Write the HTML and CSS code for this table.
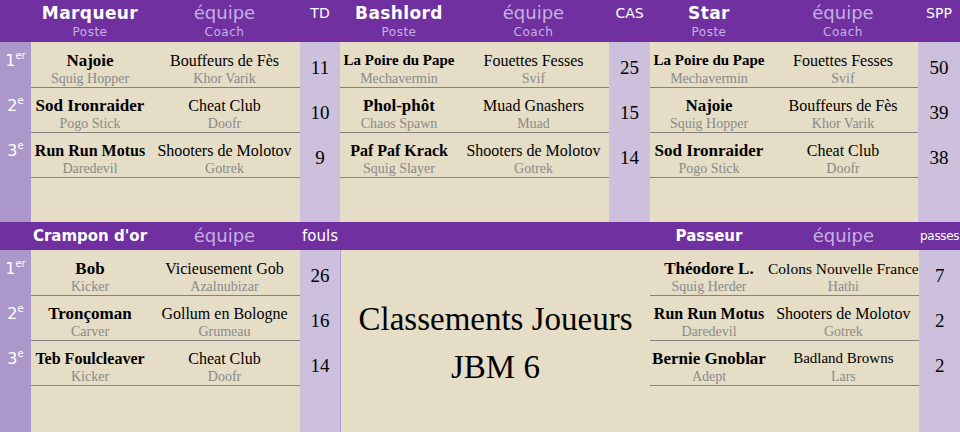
FILE: index.html
```html
<!DOCTYPE html>
<html lang="fr">
<head>
    <meta charset="UTF-8">
    <title>Classements Joueurs - JBM 6</title>
    <link rel="stylesheet" href="styles.css">
</head>
<body>
    <div class="board">
        <!-- Marqueur -->
        <section class="panel panel-top with-rank">
            <div class="panel-head">
                <div></div>
                <div class="head-cols">
                    <div class="head-cell"><span class="head-title">Marqueur</span><span class="head-sub">Poste</span></div>
                    <div class="head-cell"><span class="head-team">équipe</span><span class="head-sub">Coach</span></div>
                </div>
                <div class="head-stat">TD</div>
            </div>
            <div class="rank-col">
                <div class="rank">1<sup>er</sup></div>
                <div class="rank">2<sup>e</sup></div>
                <div class="rank">3<sup>e</sup></div>
            </div>
            <div class="rows">
                <div class="row">
                    <div class="cell"><div class="name">Najoie</div><div class="sub">Squig Hopper</div></div>
                    <div class="cell"><div class="team">Bouffeurs de Fès</div><div class="sub">Khor Varik</div></div>
                </div>
                <div class="row">
                    <div class="cell"><div class="name">Sod Ironraider</div><div class="sub">Pogo Stick</div></div>
                    <div class="cell"><div class="team">Cheat Club</div><div class="sub">Doofr</div></div>
                </div>
                <div class="row">
                    <div class="cell"><div class="name name-sm">Run Run Motus</div><div class="sub">Daredevil</div></div>
                    <div class="cell"><div class="team">Shooters de Molotov</div><div class="sub">Gotrek</div></div>
                </div>
            </div>
            <div class="value-col">
                <div class="value">11</div>
                <div class="value">10</div>
                <div class="value">9</div>
            </div>
        </section>

        <!-- Bashlord -->
        <section class="panel panel-top">
            <div class="panel-head">
                <div class="head-cols">
                    <div class="head-cell"><span class="head-title">Bashlord</span><span class="head-sub">Poste</span></div>
                    <div class="head-cell"><span class="head-team">équipe</span><span class="head-sub">Coach</span></div>
                </div>
                <div class="head-stat">CAS</div>
            </div>
            <div class="rows">
                <div class="row">
                    <div class="cell"><div class="name name-xs">La Poire du Pape</div><div class="sub">Mechavermin</div></div>
                    <div class="cell"><div class="team">Fouettes Fesses</div><div class="sub">Svif</div></div>
                </div>
                <div class="row">
                    <div class="cell"><div class="name">Phol-phôt</div><div class="sub">Chaos Spawn</div></div>
                    <div class="cell"><div class="team">Muad Gnashers</div><div class="sub">Muad</div></div>
                </div>
                <div class="row">
                    <div class="cell"><div class="name name-sm">Paf Paf Krack</div><div class="sub">Squig Slayer</div></div>
                    <div class="cell"><div class="team">Shooters de Molotov</div><div class="sub">Gotrek</div></div>
                </div>
            </div>
            <div class="value-col">
                <div class="value">25</div>
                <div class="value">15</div>
                <div class="value">14</div>
            </div>
        </section>

        <!-- Star -->
        <section class="panel panel-top panel-right">
            <div class="panel-head">
                <div class="head-cols">
                    <div class="head-cell"><span class="head-title">Star</span><span class="head-sub">Poste</span></div>
                    <div class="head-cell"><span class="head-team">équipe</span><span class="head-sub">Coach</span></div>
                </div>
                <div class="head-stat">SPP</div>
            </div>
            <div class="rows">
                <div class="row">
                    <div class="cell"><div class="name name-xs">La Poire du Pape</div><div class="sub">Mechavermin</div></div>
                    <div class="cell"><div class="team">Fouettes Fesses</div><div class="sub">Svif</div></div>
                </div>
                <div class="row">
                    <div class="cell"><div class="name">Najoie</div><div class="sub">Squig Hopper</div></div>
                    <div class="cell"><div class="team">Bouffeurs de Fès</div><div class="sub">Khor Varik</div></div>
                </div>
                <div class="row">
                    <div class="cell"><div class="name">Sod Ironraider</div><div class="sub">Pogo Stick</div></div>
                    <div class="cell"><div class="team">Cheat Club</div><div class="sub">Doofr</div></div>
                </div>
            </div>
            <div class="value-col">
                <div class="value">50</div>
                <div class="value">39</div>
                <div class="value">38</div>
            </div>
        </section>

        <!-- Crampon d'or -->
        <section class="panel panel-bottom with-rank">
            <div class="panel-head">
                <div></div>
                <div class="head-cols">
                    <div class="head-cell"><span class="head-title">Crampon d'or</span></div>
                    <div class="head-cell"><span class="head-team">équipe</span></div>
                </div>
                <div class="head-stat">fouls</div>
            </div>
            <div class="rank-col">
                <div class="rank">1<sup>er</sup></div>
                <div class="rank">2<sup>e</sup></div>
                <div class="rank">3<sup>e</sup></div>
            </div>
            <div class="rows">
                <div class="row">
                    <div class="cell"><div class="name">Bob</div><div class="sub">Kicker</div></div>
                    <div class="cell"><div class="team">Vicieusement Gob</div><div class="sub">Azalnubizar</div></div>
                </div>
                <div class="row">
                    <div class="cell"><div class="name">Tronçoman</div><div class="sub">Carver</div></div>
                    <div class="cell"><div class="team">Gollum en Bologne</div><div class="sub">Grumeau</div></div>
                </div>
                <div class="row">
                    <div class="cell"><div class="name name-sm">Teb Foulcleaver</div><div class="sub">Kicker</div></div>
                    <div class="cell"><div class="team">Cheat Club</div><div class="sub">Doofr</div></div>
                </div>
            </div>
            <div class="value-col">
                <div class="value">26</div>
                <div class="value">16</div>
                <div class="value">14</div>
            </div>
        </section>

        <!-- Titre -->
        <section class="panel panel-bottom panel-title">
            <div class="panel-head"></div>
            <div class="title-card">
                <div>Classements Joueurs</div>
                <div>JBM 6</div>
            </div>
        </section>

        <!-- Passeur -->
        <section class="panel panel-bottom panel-right">
            <div class="panel-head">
                <div class="head-cols">
                    <div class="head-cell"><span class="head-title">Passeur</span></div>
                    <div class="head-cell"><span class="head-team">équipe</span></div>
                </div>
                <div class="head-stat head-stat-sm">passes</div>
            </div>
            <div class="rows">
                <div class="row">
                    <div class="cell"><div class="name">Théodore L.</div><div class="sub">Squig Herder</div></div>
                    <div class="cell"><div class="team team-xs">Colons Nouvelle France</div><div class="sub">Hathi</div></div>
                </div>
                <div class="row">
                    <div class="cell"><div class="name name-sm">Run Run Motus</div><div class="sub">Daredevil</div></div>
                    <div class="cell"><div class="team">Shooters de Molotov</div><div class="sub">Gotrek</div></div>
                </div>
                <div class="row">
                    <div class="cell"><div class="name">Bernie Gnoblar</div><div class="sub">Adept</div></div>
                    <div class="cell"><div class="team team-sm">Badland Browns</div><div class="sub">Lars</div></div>
                </div>
            </div>
            <div class="value-col">
                <div class="value">7</div>
                <div class="value">2</div>
                <div class="value">2</div>
            </div>
        </section>
    </div>
</body>
</html>
```

FILE: styles.css
```css
:root {
    --purple: #7030a0;
    --rank-bg: #ab97c9;
    --value-bg: #cdc0dc;
    --paper: #e5ddc6;
    --lilac-text: #c5b0e2;
    --sub-text: #8a8a8a;
    --line: #838383;
    --head-font: 'Comic Sans MS', 'DejaVu Sans', sans-serif;
    --body-font: 'Liberation Serif', serif;
}

* {
    box-sizing: border-box;
    margin: 0;
    padding: 0;
}

body {
    width: 960px;
    height: 432px;
    overflow: hidden;
    background-color: var(--paper);
    font-family: var(--body-font);
    color: #000;
}

.board {
    display: grid;
    grid-template-columns: 340px 310px 310px;
    grid-template-rows: 222px 210px;
}

.panel {
    display: grid;
    grid-template-columns: 1fr 41px;
    background-color: var(--paper);
}

.panel.with-rank {
    grid-template-columns: 31px 1fr 40px;
}

.panel.panel-right {
    grid-template-columns: 1fr 42px;
}

.panel-top {
    grid-template-rows: 42px 1fr;
}

.panel-bottom {
    grid-template-rows: 28px 1fr;
}

/* header bar */
.panel-head {
    grid-column: 1 / -1;
    display: grid;
    grid-template-columns: inherit;
    background-color: var(--purple);
    font-family: var(--head-font);
}

.head-cols {
    display: grid;
    grid-template-columns: 118px 1fr;
}

.head-cell {
    display: flex;
    flex-direction: column;
    align-items: center;
    white-space: nowrap;
}

.panel-top .head-cell {
    padding-top: 2px;
}

.panel-bottom .head-cell {
    justify-content: center;
}

.head-title {
    color: #fff;
    font-weight: bold;
    font-size: 17px;
    letter-spacing: 0.4px;
    line-height: 22px;
}

.panel-bottom .head-title {
    font-size: 15px;
    letter-spacing: 0;
}

.head-team {
    color: var(--lilac-text);
    font-size: 18px;
    line-height: 22px;
}

.head-sub {
    color: var(--lilac-text);
    font-size: 12px;
    letter-spacing: 0.5px;
    line-height: 16px;
}

.head-stat {
    color: #fff;
    font-size: 14px;
    text-align: center;
    padding-top: 5px;
}

.panel-bottom .head-stat {
    padding-top: 0;
    line-height: 28px;
    font-size: 15px;
}

.panel-bottom .head-stat-sm {
    font-size: 12px;
    letter-spacing: -0.3px;
}

/* side columns */
.rank-col {
    background-color: var(--rank-bg);
}

.rank {
    height: 45px;
    padding-top: 10px;
    text-align: center;
    color: #fff;
    font-family: var(--head-font);
    font-size: 16px;
    line-height: 18px;
}

.rank sup {
    font-size: 10px;
    vertical-align: 7px;
    line-height: 0;
}

.value-col {
    background-color: var(--value-bg);
    padding-top: 1px;
}

.value {
    height: 45px;
    display: flex;
    align-items: center;
    justify-content: center;
    padding-top: 5px;
    font-size: 19px;
}

/* data rows */
.rows {
    padding-top: 1px;
}

.row {
    display: grid;
    grid-template-columns: 118px 1fr;
    height: 45px;
    padding-top: 7px;
    border-bottom: 1px solid var(--line);
}

.cell {
    text-align: center;
    white-space: nowrap;
}

.name {
    font-weight: bold;
    font-size: 17px;
    line-height: 21px;
}

.name-sm {
    font-size: 16px;
}

.name-xs {
    font-size: 15px;
}

.team {
    font-size: 16px;
    line-height: 21px;
}

.team-sm {
    font-size: 15px;
}

.team-xs {
    font-size: 15.5px;
}

.sub {
    color: var(--sub-text);
    font-size: 14px;
    line-height: 15px;
}

/* centre title */
.panel-title .title-card {
    grid-column: 1 / -1;
    display: flex;
    flex-direction: column;
    align-items: center;
    justify-content: center;
    padding-top: 4px;
    border-left: 1px solid #b79bd6;
    font-size: 33px;
    line-height: 48px;
}
```
